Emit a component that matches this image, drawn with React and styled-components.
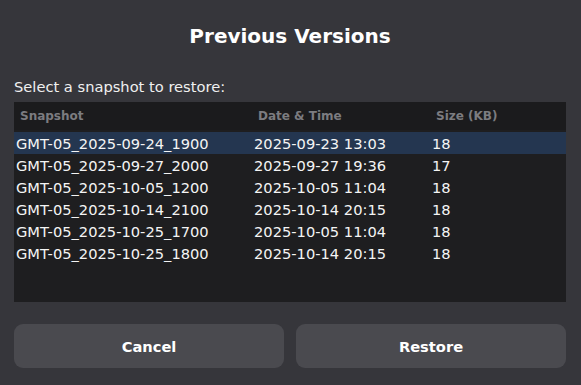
import React from 'react';
import styled, { createGlobalStyle } from 'styled-components';

const GlobalStyle = createGlobalStyle`
  html, body {
    margin: 0;
    padding: 0;
    background: #36363b;
  }
  body {
    font-family: "DejaVu Sans", sans-serif;
    color: #ffffff;
  }
`;

const Dialog = styled.div`
  box-sizing: border-box;
  width: 581px;
  height: 385px;
  padding: 0 15px 17px 14px;
  display: flex;
  flex-direction: column;
  background: #36363b;
`;

const Title = styled.h1`
  margin: 23px 0 0;
  font-size: 20px;
  font-weight: bold;
  line-height: 26px;
  text-align: center;
  color: #ffffff;
`;

const Label = styled.div`
  margin-top: 29px;
  font-size: 14.67px;
  line-height: 18px;
  color: #f0f0f0;
`;

const Table = styled.div`
  margin-top: 6px;
  height: 200px;
  background: #1e1e20;
  display: flex;
  flex-direction: column;
`;

const Row = styled.div`
  display: grid;
  grid-template-columns: 238px 178px 1fr;
  height: ${p => (p.$head ? '28px' : '22px')};
  align-items: center;
  margin-bottom: ${p => (p.$head ? '2px' : '0')};
  padding-left: ${p => (p.$head ? '6px' : '2px')};
  background: ${p => (p.$head ? '#1b1b1d' : p.$selected ? '#243650' : 'transparent')};
  font-size: ${p => (p.$head ? '12px' : '14.67px')};
  font-weight: ${p => (p.$head ? 'bold' : 'normal')};
  color: ${p => (p.$head ? '#7c7c80' : '#f4f4f4')};
  white-space: nowrap;
`;

const Cell = styled.span`
  overflow: hidden;
`;

const Buttons = styled.div`
  margin-top: auto;
  display: grid;
  grid-template-columns: 1fr 1fr;
  gap: 12px;
`;

const Button = styled.button`
  height: 44px;
  border: none;
  border-radius: 9px;
  background: #4a4a4f;
  color: #ffffff;
  font-family: "DejaVu Sans", sans-serif;
  font-size: 14.67px;
  font-weight: bold;
`;

const snapshots = [
  ['GMT-05_2025-09-24_1900', '2025-09-23 13:03', '18'],
  ['GMT-05_2025-09-27_2000', '2025-09-27 19:36', '17'],
  ['GMT-05_2025-10-05_1200', '2025-10-05 11:04', '18'],
  ['GMT-05_2025-10-14_2100', '2025-10-14 20:15', '18'],
  ['GMT-05_2025-10-25_1700', '2025-10-05 11:04', '18'],
  ['GMT-05_2025-10-25_1800', '2025-10-14 20:15', '18'],
];

export default function App() {
  return (
    <>
      <GlobalStyle />
      <Dialog>
        <Title>Previous Versions</Title>
        <Label>Select a snapshot to restore:</Label>
        <Table>
          <Row $head>
            <Cell>Snapshot</Cell>
            <Cell>Date &amp; Time</Cell>
            <Cell>Size (KB)</Cell>
          </Row>
          {snapshots.map((s, i) => (
            <Row key={s[0] + i} $selected={i === 0}>
              <Cell>{s[0]}</Cell>
              <Cell>{s[1]}</Cell>
              <Cell>{s[2]}</Cell>
            </Row>
          ))}
        </Table>
        <Buttons>
          <Button>Cancel</Button>
          <Button>Restore</Button>
        </Buttons>
      </Dialog>
    </>
  );
}
